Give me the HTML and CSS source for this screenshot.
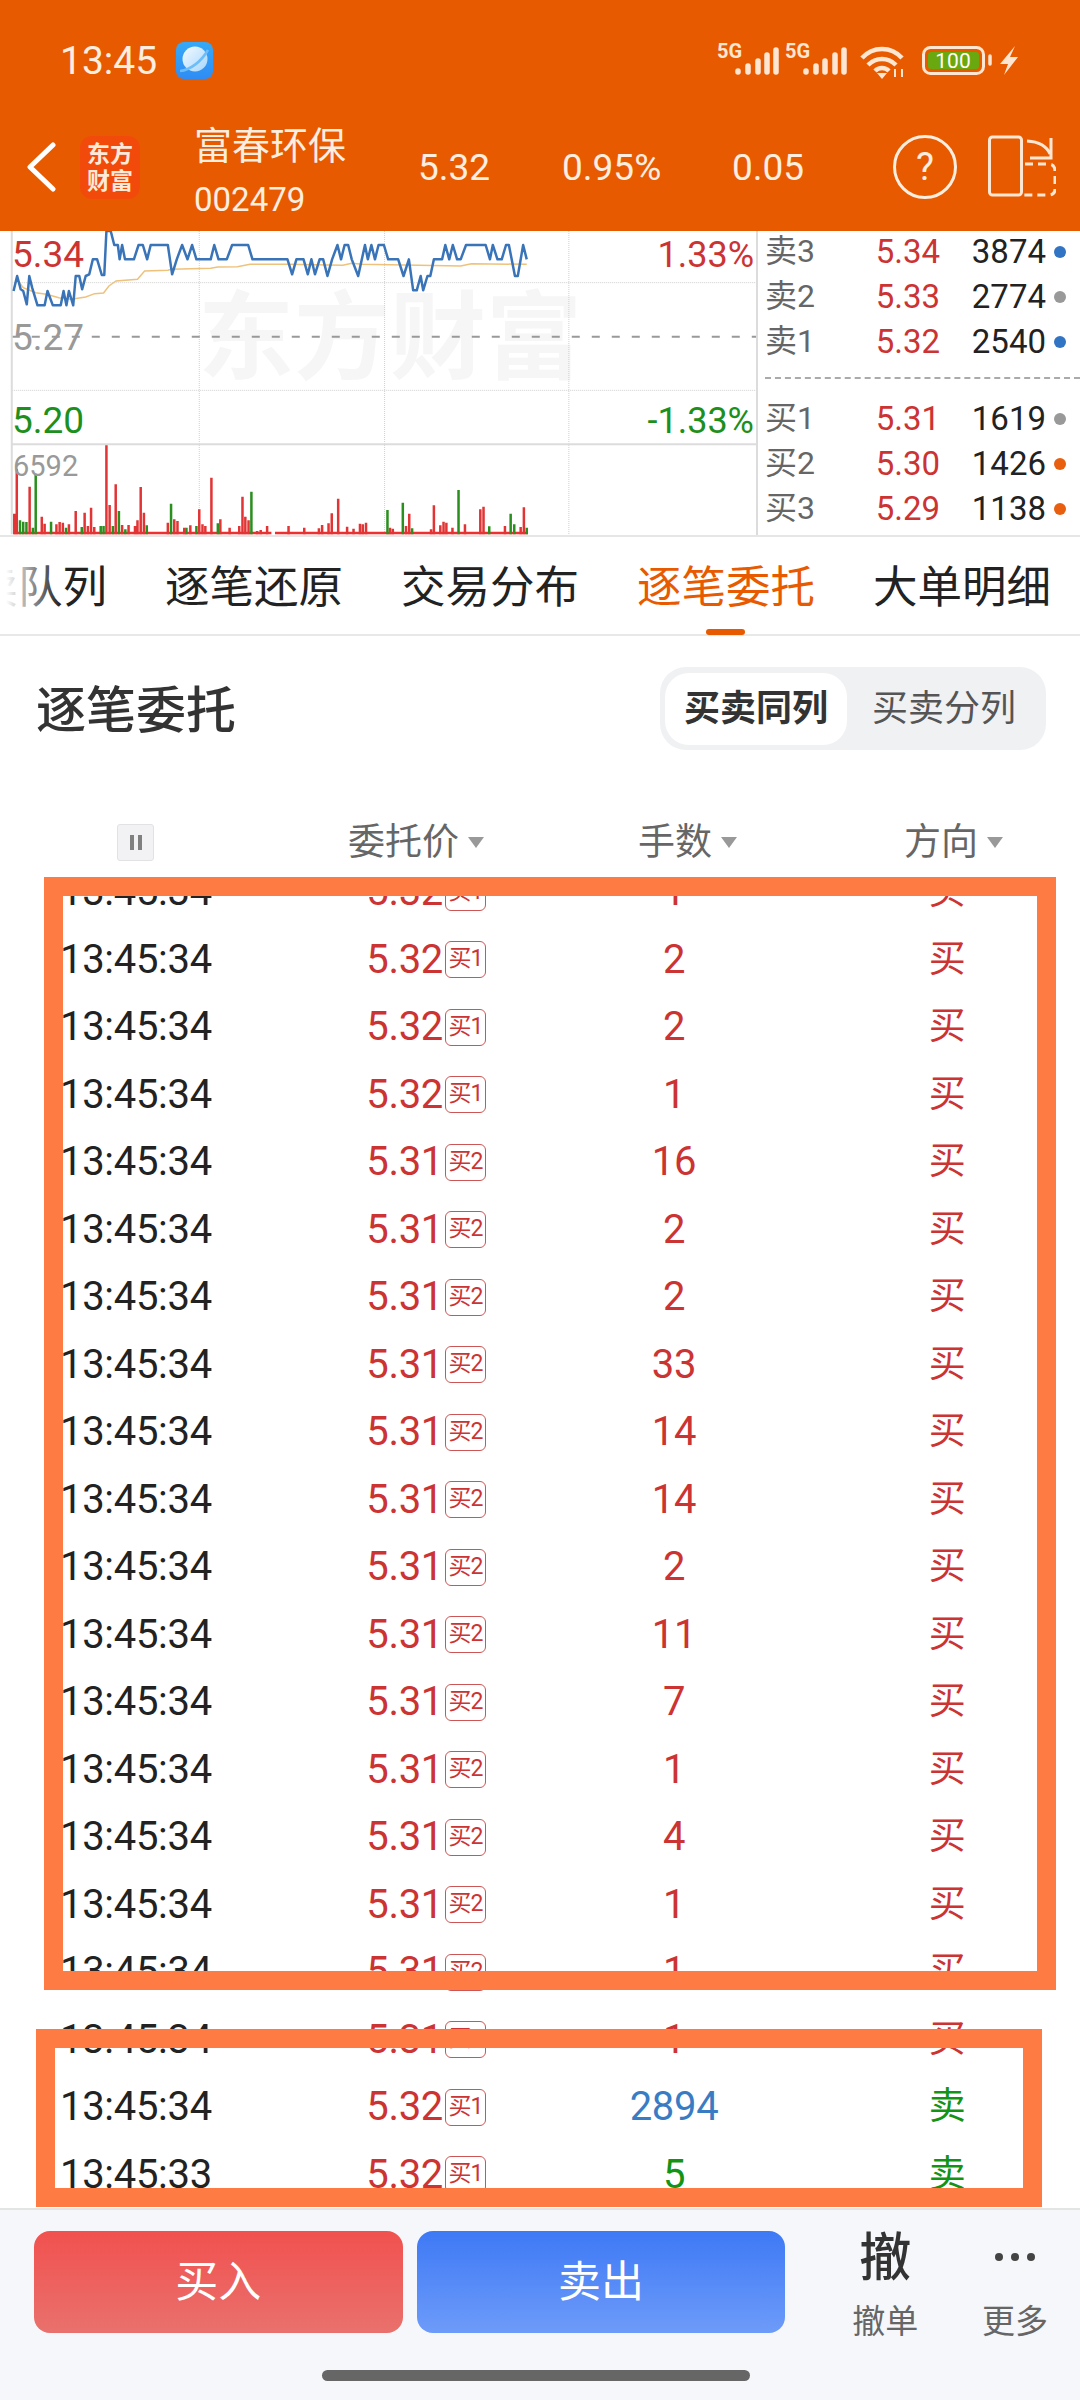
FILE: index.html
```html
<!DOCTYPE html>
<html lang="zh-CN">
<head>
    <meta charset="UTF-8">
    <title>富春环保 002479</title>
    <link rel="stylesheet" href="styles.css">
</head>
<body>
<div class="page">
    <header class="top">
        <div class="status">
            <span class="status-time">13:45</span>
            <svg class="app-icon" viewBox="0 0 37 37">
                <defs>
                    <linearGradient id="appBg" x1="0" y1="0" x2="0" y2="1"><stop offset="0" stop-color="#36a9f7"/><stop offset="1" stop-color="#2f8cf4"/></linearGradient>
                    <linearGradient id="planet" x1="0" y1="0" x2="1" y2="1"><stop offset="0" stop-color="#f4fbff"/><stop offset="1" stop-color="#a5d6fb"/></linearGradient>
                </defs>
                <rect width="37" height="37" rx="8" fill="url(#appBg)"/>
                <circle cx="19" cy="17" r="12.5" fill="url(#planet)"/>
                <path d="M4 29C14 28 25 20 32 8" stroke="#6cbdf9" stroke-width="2.5" fill="none"/>
            </svg>
            <svg class="status-icons" viewBox="0 0 320 50">
                <text x="7" y="22" class="net">5G</text>
                <path d="M28 36v-1M38 36v-6M48 36v-11M57 36v-17M66 36v-22" stroke="#fde6d2" stroke-width="5.5" stroke-linecap="round"/>
                <text x="75" y="22" class="net">5G</text>
                <path d="M96 36v-1M106 36v-6M115 36v-11M125 36v-17M134 36v-22" stroke="#fde6d2" stroke-width="5.5" stroke-linecap="round"/>
                <path d="M152 22C163 10 181 10 192 22M158 29C166 21 178 21 186 29M165 35C169 31 175 31 179 35" stroke="#fde6d2" stroke-width="4.5" fill="none"/>
                <path d="M167 37h10l-5 6z" fill="#fde6d2"/>
                <path d="M185 33v8M192 33v8" stroke="#fde6d2" stroke-width="2"/>
                <rect x="213.500" y="11.500" width="60" height="26" rx="7" fill="none" stroke="#fde6d2" stroke-width="3"/>
                <rect x="218" y="16" width="51" height="17" rx="3" fill="#6aa80f"/>
                <text x="243" y="32" class="batt">100</text>
                <path d="M280 20v8" stroke="#fde6d2" stroke-width="3.500" stroke-linecap="round"/>
                <path d="M305 10L290 28h8l-4 11 14-18h-8z" fill="#fde6d2"/>
            </svg>
        </div>
        <div class="quote">
            <svg class="back" viewBox="0 0 30 50"><path d="M27 3L4 25l23 22" fill="none" stroke="#fff" stroke-width="5" stroke-linecap="round" stroke-linejoin="round"/></svg>
            <div class="logo">东方<br>财富</div>
            <div class="stock">
                <div class="stock-name">富春环保</div>
                <div class="stock-code">002479</div>
            </div>
            <div class="q-val q-price">5.32</div>
            <div class="q-val q-pct">0.95%</div>
            <div class="q-val q-chg">0.05</div>
            <svg class="help" viewBox="0 0 66 66">
                <circle cx="33" cy="33" r="30.500" fill="none" stroke="#fdeee0" stroke-width="3"/>
                <text x="33" y="46" class="help-mark">?</text>
            </svg>
            <svg class="split" viewBox="18 11 68 64">
                <rect x="19.500" y="13" width="32" height="58" rx="3" fill="none" stroke="#fde6d2" stroke-width="3"/>
                <path d="M57 17Q75 18 80 30M81 14V34H60" fill="none" stroke="#fde6d2" stroke-width="3"/>
                <path d="M55 40H78Q85 40 85 47V65Q85 71 78 71H54" fill="none" stroke="#fde6d2" stroke-width="3" stroke-dasharray="8 5"/>
            </svg>
        </div>
    </header>

    <section class="market">
        <div class="chart">
            <svg class="chart-svg" viewBox="0 0 2117 915" preserveAspectRatio="none">
                <!-- grid, units follow the 2.8x / 3x trace of the picture -->
                <path d="M33 155H2117M33 478H2117M558 0V910M1077 0V910M1593 0V910" class="grid"/>
                <path d="M33 317H2117" class="midline"/>
                <path d="M33 640H2117" class="divider"/>
                <path d="M33 0V910" class="divider"/>
                <polyline class="avg" points="48,145 65,170 100,185 130,190 165,200 200,205 240,198 265,188 290,186 305,165 325,150 385,145 405,120 470,118 480,115 590,112 610,108 665,107 700,100 805,100 960,103 985,97 1015,100 1290,105 1320,98 1475,100"/>
                <polyline class="price" points="38,180 48,135 58,175 65,180 75,220 82,135 90,170 105,223 125,223 133,180 148,223 170,223 178,180 186,223 193,180 205,223 212,135 222,135 230,175 240,135 250,130 260,85 272,85 285,132 292,132 298,0 310,0 320,42 330,42 335,85 342,42 350,85 375,85 388,42 400,42 412,85 422,42 470,42 482,130 495,85 510,42 525,85 538,42 550,85 590,85 600,42 612,85 635,85 650,42 695,42 707,85 805,85 818,130 830,85 850,85 862,130 872,85 882,130 895,85 905,85 917,135 930,85 945,42 955,85 965,42 975,42 985,85 1003,135 1022,42 1030,85 1040,42 1050,85 1060,42 1075,42 1087,85 1115,85 1130,135 1145,85 1157,178 1167,178 1178,135 1185,178 1197,135 1205,135 1215,85 1238,85 1247,42 1258,85 1268,42 1280,85 1290,85 1305,42 1360,42 1372,85 1380,42 1393,85 1405,85 1417,42 1425,42 1442,135 1450,135 1465,42 1475,85"/>
                <path class="vol-fill" d="M38 906H760M770 906H1478"/>
                <path class="vol-red" d="M40 848V910M47 715V910M83 767V910M117 857V910M125 878V910M158 880V910M167 873V910M176 875V910M193 880V910M212 840V910M237 845V910M246 885V910M255 830V910M264 888V910M298 643V910M307 822V910M324 760V910M342 882V910M360 882V910M378 885V910M385 868V910M394 768V910M403 845V910M470 875V910M488 865V910M497 870V910M516 890V910M533 883V910M558 835V910M567 880V910M575 885V910M592 740V910M617 865V910M643 890V910M670 885V910M679 797V910M687 857V910M696 868V910M720 900V910M730 897V910M748 885V910M808 885V910M852 890V910M893 892V910M902 882V910M920 877V910M929 847V910M947 803V910M972 887V910M990 893V910M1008 878V910M1016 880V910M1025 875V910M1092 890V910M1100 893V910M1137 885V910M1146 848V910M1207 895V910M1215 823V910M1233 883V910M1242 872V910M1250 875V910M1267 890V910M1302 880V910M1345 835V910M1354 827V910M1414 885V910M1458 888V910M1467 829V910"/>
                <path class="vol-green" d="M56 868V910M65 872V910M74 873V910M92 890V910M100 728V910M143 872V910M185 890V910M229 888V910M282 885V910M290 885V910M316 885V910M333 840V910M351 895V910M411 883V910M479 818V910M522 890V910M550 885V910M610 877V910M704 782V910M1085 837V910M1128 815V910M1154 892V910M1284 777V910M1370 886V910M1430 848V910M1440 880V910M1475 890V910"/>
            </svg>
            <div class="watermark">东方财富</div>
            <span class="axis axis-high">5.34</span>
            <span class="axis axis-mid">5.27</span>
            <span class="axis axis-low">5.20</span>
            <span class="axis axis-vol">6592</span>
            <span class="axis axis-up">1.33%</span>
            <span class="axis axis-down">-1.33%</span>
        </div>
        <div class="book">
            <div class="book-row"><span class="b-label">卖3</span><span class="b-price">5.34</span><span class="b-qty">3874</span><i class="dot dot-blue"></i></div>
            <div class="book-row"><span class="b-label">卖2</span><span class="b-price">5.33</span><span class="b-qty">2774</span><i class="dot dot-gray"></i></div>
            <div class="book-row"><span class="b-label">卖1</span><span class="b-price">5.32</span><span class="b-qty">2540</span><i class="dot dot-blue"></i></div>
            <div class="book-sep"></div>
            <div class="book-row"><span class="b-label">买1</span><span class="b-price">5.31</span><span class="b-qty">1619</span><i class="dot dot-gray"></i></div>
            <div class="book-row"><span class="b-label">买2</span><span class="b-price">5.30</span><span class="b-qty">1426</span><i class="dot dot-orange"></i></div>
            <div class="book-row"><span class="b-label">买3</span><span class="b-price">5.29</span><span class="b-qty">1138</span><i class="dot dot-orange"></i></div>
        </div>
    </section>

    <nav class="tabs">
        <span class="tab">买卖队列</span>
        <span class="tab">逐笔还原</span>
        <span class="tab">交易分布</span>
        <span class="tab tab-on">逐笔委托</span>
        <span class="tab">大单明细</span>
        <div class="tabs-fade"></div>
    </nav>

    <div class="head">
        <h2 class="head-title">逐笔委托</h2>
        <div class="seg">
            <span class="seg-item seg-on">买卖同列</span>
            <span class="seg-item">买卖分列</span>
        </div>
    </div>

    <div class="cols">
        <span class="pause"><i></i><i></i></span>
        <span class="col-name">委托价<b></b></span>
        <span class="col-name">手数<b></b></span>
        <span class="col-name">方向<b></b></span>
    </div>

    <div class="list">
        <div class="row"><span>13:45:34</span><span class="price">5.32<em>买1</em></span><span class="qty">1</span><span class="dir">买</span></div>
        <div class="row"><span>13:45:34</span><span class="price">5.32<em>买1</em></span><span class="qty">2</span><span class="dir">买</span></div>
        <div class="row"><span>13:45:34</span><span class="price">5.32<em>买1</em></span><span class="qty">2</span><span class="dir">买</span></div>
        <div class="row"><span>13:45:34</span><span class="price">5.32<em>买1</em></span><span class="qty">1</span><span class="dir">买</span></div>
        <div class="row"><span>13:45:34</span><span class="price">5.31<em>买2</em></span><span class="qty">16</span><span class="dir">买</span></div>
        <div class="row"><span>13:45:34</span><span class="price">5.31<em>买2</em></span><span class="qty">2</span><span class="dir">买</span></div>
        <div class="row"><span>13:45:34</span><span class="price">5.31<em>买2</em></span><span class="qty">2</span><span class="dir">买</span></div>
        <div class="row"><span>13:45:34</span><span class="price">5.31<em>买2</em></span><span class="qty">33</span><span class="dir">买</span></div>
        <div class="row"><span>13:45:34</span><span class="price">5.31<em>买2</em></span><span class="qty">14</span><span class="dir">买</span></div>
        <div class="row"><span>13:45:34</span><span class="price">5.31<em>买2</em></span><span class="qty">14</span><span class="dir">买</span></div>
        <div class="row"><span>13:45:34</span><span class="price">5.31<em>买2</em></span><span class="qty">2</span><span class="dir">买</span></div>
        <div class="row"><span>13:45:34</span><span class="price">5.31<em>买2</em></span><span class="qty">11</span><span class="dir">买</span></div>
        <div class="row"><span>13:45:34</span><span class="price">5.31<em>买2</em></span><span class="qty">7</span><span class="dir">买</span></div>
        <div class="row"><span>13:45:34</span><span class="price">5.31<em>买2</em></span><span class="qty">1</span><span class="dir">买</span></div>
        <div class="row"><span>13:45:34</span><span class="price">5.31<em>买2</em></span><span class="qty">4</span><span class="dir">买</span></div>
        <div class="row"><span>13:45:34</span><span class="price">5.31<em>买2</em></span><span class="qty">1</span><span class="dir">买</span></div>
        <div class="row"><span>13:45:34</span><span class="price">5.31<em>买2</em></span><span class="qty">1</span><span class="dir">买</span></div>
        <div class="row"><span>13:45:34</span><span class="price">5.31<em>买2</em></span><span class="qty">1</span><span class="dir">买</span></div>
        <div class="row"><span>13:45:34</span><span class="price">5.32<em>买1</em></span><span class="qty qty-big">2894</span><span class="dir dir-sell">卖</span></div>
        <div class="row"><span>13:45:33</span><span class="price">5.32<em>买1</em></span><span class="qty qty-sell">5</span><span class="dir dir-sell">卖</span></div>
    </div>

    <footer class="bar">
        <div class="bar-main">
            <span class="btn btn-buy">买入</span>
            <span class="btn btn-sell">卖出</span>
            <div class="act">
                <span class="act-big">撤</span>
                <span class="act-text">撤单</span>
            </div>
            <div class="act">
                <span class="act-dots"><i></i><i></i><i></i></span>
                <span class="act-text">更多</span>
            </div>
        </div>
        <div class="home"></div>
    </footer>

    <!-- marks drawn over the screenshot -->
    <div class="mark mark-a"></div>
    <div class="mark mark-b"></div>
</div>
</body>
</html>
```

FILE: styles.css
```css
* {
    margin: 0;
    padding: 0;
    box-sizing: border-box;
}

body {
    font-family: "Roboto", "Noto Sans CJK SC", sans-serif;
    background: #fff;
}

.page {
    position: relative;
    width: 1080px;
    height: 2400px;
    display: flex;
    flex-direction: column;
    overflow: hidden;
}

/* top orange block */
.top {
    height: 231px;
    background: #e85a00;
    color: #fdeee0;
}

.status {
    height: 115px;
    display: flex;
    align-items: center;
    padding: 6px 0 0 60px;
}

.status-time {
    font-size: 39px;
    line-height: 46px;
    width: 116px;
}

.app-icon {
    width: 37px;
    height: 37px;
}

.status-icons {
    width: 320px;
    height: 50px;
    margin-left: 497px;
}

.net {
    font: bold 20px "Roboto", sans-serif;
    fill: #fde6d2;
}

.batt {
    font: 21px "Roboto", sans-serif;
    fill: #fff;
    text-anchor: middle;
}

.quote {
    height: 116px;
    display: flex;
    align-items: center;
    padding: 0 0 12px 26px;
}

.back {
    width: 30px;
    height: 50px;
    margin-right: 24px;
}

.logo {
    width: 60px;
    height: 63px;
    margin-right: 54px;
    border-radius: 12px;
    background: #f24a0b;
    color: #ffe9d8;
    font-size: 23px;
    line-height: 27px;
    font-weight: 700;
    text-align: center;
    padding-top: 5px;
}

.stock {
    width: 224px;
    margin-top: 8px;
}

.stock-name {
    font-size: 38px;
    line-height: 50px;
}

.stock-code {
    font-size: 33px;
    line-height: 42px;
    margin-top: 8px;
}

.q-val {
    font-size: 37px;
    line-height: 46px;
    margin-top: 2px;
}

.q-price {
    width: 144px;
}

.q-pct {
    width: 170px;
}

.q-chg {
    width: 160px;
}

.help {
    width: 66px;
    height: 66px;
    margin-right: 30px;
}

.help-mark {
    font: 38px "Roboto", sans-serif;
    fill: #fdeee0;
    text-anchor: middle;
}

.split {
    width: 68px;
    height: 64px;
}

/* chart and order book */
.market {
    height: 306px;
    display: flex;
    border-bottom: 2px solid #e6e6e6;
}

.chart {
    position: relative;
    width: 756px;
    overflow: hidden;
}

.chart-svg {
    position: absolute;
    left: 0;
    top: 0;
    width: 756px;
    height: 305px;
}

.chart-svg .grid {
    fill: none;
    stroke: #cfcfcf;
    stroke-width: 1;
    stroke-dasharray: 1 1;
    vector-effect: non-scaling-stroke;
}

.midline {
    fill: none;
    stroke: #999;
    stroke-width: 2;
    stroke-dasharray: 8 12;
    vector-effect: non-scaling-stroke;
}

.divider {
    fill: none;
    stroke: #dcdcdc;
    stroke-width: 2;
    vector-effect: non-scaling-stroke;
}

.chart-svg .price {
    fill: none;
    stroke: #3a74b8;
    stroke-width: 2.5;
    stroke-linejoin: round;
    vector-effect: non-scaling-stroke;
}

.avg {
    fill: none;
    stroke: #eec27a;
    stroke-width: 1.5;
    vector-effect: non-scaling-stroke;
}

.vol-fill {
    fill: none;
    stroke: #ee3030;
    stroke-width: 2.5;
    vector-effect: non-scaling-stroke;
}

.vol-red {
    fill: none;
    stroke: #e23434;
    stroke-width: 2.5;
    vector-effect: non-scaling-stroke;
}

.vol-green {
    fill: none;
    stroke: #2a8f1e;
    stroke-width: 2.5;
    vector-effect: non-scaling-stroke;
}

.watermark {
    position: absolute;
    left: 198px;
    top: 47px;
    font-size: 96px;
    line-height: 120px;
    font-weight: 700;
    color: #f6f6f6;
    white-space: nowrap;
    z-index: -1;
}

.axis {
    position: absolute;
    font-size: 37px;
    line-height: 42px;
}

.axis-high {
    left: 12px;
    top: 3px;
    color: #cc3333;
}

.axis-mid {
    left: 12px;
    top: 86px;
    color: #999;
}

.axis-low {
    left: 12px;
    top: 169px;
    color: #1d8f1d;
}

.axis-vol {
    left: 13px;
    top: 217px;
    font-size: 29px;
    line-height: 36px;
    color: #999;
}

.axis-up {
    right: 2px;
    top: 3px;
    font-size: 36px;
    color: #cc3333;
}

.axis-down {
    right: 2px;
    top: 169px;
    font-size: 36px;
    color: #1d8f1d;
}

.book {
    width: 324px;
    padding-left: 7px;
    border-left: 2px solid #dcdcdc;
    font-size: 33px;
}

.book-row {
    height: 45px;
    display: grid;
    grid-template-columns: 60px 115px 106px 20px;
    align-items: center;
    line-height: 45px;
}

.book-row:first-child {
    margin-top: -2px;
}

.b-label {
    color: #666;
    font-size: 32px;
}

.b-price {
    color: #cc3333;
    text-align: right;
}

.b-qty {
    color: #222;
    text-align: right;
}

.dot {
    width: 12px;
    height: 12px;
    border-radius: 50%;
    margin-left: 8px;
}

.dot-blue {
    background: #3274c4;
}

.dot-gray {
    background: #999;
}

.dot-orange {
    background: #e85f10;
}

.book-sep {
    height: 15px;
    margin-bottom: 17px;
    border-bottom: 2px dashed #aaa;
}

/* tabs */
.tabs {
    position: relative;
    height: 99px;
    flex: none;
    display: flex;
    gap: 58px;
    padding-top: 19px;
    border-bottom: 2px solid #e8e8e8;
    font-size: 44.5px;
    line-height: 64px;
    color: #222;
    white-space: nowrap;
}

.tab:first-child {
    margin-left: -71px;
}

.tab-on {
    position: relative;
    color: #e85a00;
}

.tab-on::after {
    content: "";
    position: absolute;
    left: 69px;
    bottom: -1px;
    width: 39px;
    height: 6px;
    border-radius: 3px;
    background: #e85a00;
}

.tabs-fade {
    position: absolute;
    left: 0;
    top: 0;
    bottom: 2px;
    width: 60px;
    background: linear-gradient(to right, #fff 10%, rgba(255, 255, 255, 0));
}

/* section head */
.head {
    height: 153px;
    flex: none;
    display: flex;
    align-items: flex-start;
    justify-content: space-between;
    padding: 31px 34px 0 36px;
}

.head-title {
    font-size: 50px;
    line-height: 84px;
    margin-top: 2px;
    font-weight: 500;
    color: #333;
}

.seg {
    width: 386px;
    height: 83px;
    display: flex;
    align-items: center;
    padding: 0 5px;
    border-radius: 26px;
    background: #f0f1f3;
    font-size: 36px;
    color: #555;
}

.seg-item {
    width: 182px;
    height: 72px;
    line-height: 72px;
    text-align: center;
    white-space: nowrap;
}

.seg-item + .seg-item {
    width: 194px;
}

.seg-on {
    background: #fff;
    border-radius: 24px;
    font-weight: 700;
    color: #333;
}

/* table */
.cols {
    height: 88px;
    display: grid;
    grid-template-columns: 231px 290px 266px auto;
    align-items: center;
    align-content: start;
    padding: 35px 0 0 117px;
    font-size: 37px;
    line-height: 37px;
    color: #666;
    flex: none;
}

.pause {
    width: 37px;
    height: 37px;
    display: flex;
    justify-content: center;
    align-items: center;
    gap: 4px;
    background: #f2f2f4;
    border: 1px solid #e2e2e4;
    border-radius: 3px;
}

.pause i {
    width: 4px;
    height: 15px;
    background: #808080;
}

.col-name {
    display: flex;
    align-items: center;
}

.col-name b {
    width: 0;
    height: 0;
    margin-left: 9px;
    border-left: 8px solid transparent;
    border-right: 8px solid transparent;
    border-top: 11px solid #999;
}

.list {
    flex: 1;
    min-height: 0;
    overflow: hidden;
}

.row {
    height: 67.5px;
    display: grid;
    grid-template-columns: 296px 130px 376px 170px;
    align-items: center;
    padding-left: 60px;
    font-size: 40px;
    line-height: 48px;
    letter-spacing: -0.3px;
    color: #222;
    white-space: nowrap;
}

.row:first-child {
    margin-top: -18.75px;
}

.price {
    display: flex;
    justify-content: flex-end;
    align-items: center;
    gap: 2px;
    color: #cc3333;
}

.price em {
    width: 41px;
    height: 37px;
    border: 1px solid #cc5555;
    border-radius: 6px;
    font-style: normal;
    font-size: 23px;
    line-height: 34px;
    text-align: center;
    letter-spacing: -1px;
}

.qty {
    text-align: center;
    color: #cc3333;
}

.qty-big {
    color: #3a7cc4;
}

.qty-sell {
    color: #149314;
}

.dir {
    text-align: center;
    font-size: 37px;
    color: #cc3333;
}

.dir-sell {
    color: #149314;
}

/* bottom bar */
.bar {
    height: 192px;
    background: #f5f7fa;
    border-top: 2px solid #e4e4e4;
    flex: none;
    position: relative;
    z-index: 2;
}

.bar-main {
    display: flex;
    padding: 21px 0 0 34px;
    height: 136px;
}

.btn {
    width: 369px;
    height: 102px;
    border-radius: 16px;
    color: #fff;
    font-size: 43px;
    line-height: 102px;
    text-align: center;
}

.btn-buy {
    background: linear-gradient(#f1514f, #e9716d);
    margin-right: 14px;
}

.btn-sell {
    background: linear-gradient(#3e79f5, #6d9bf9);
    margin-right: 35px;
}

.act {
    width: 130px;
    margin-top: -2px;
    display: flex;
    flex-direction: column;
    align-items: center;
}

.act-big {
    height: 70px;
    font-size: 52px;
    line-height: 60px;
    font-weight: 500;
    color: #333;
}

.act-text {
    font-size: 33px;
    line-height: 40px;
    color: #666;
    margin-top: 3px;
}

.act-dots {
    height: 70px;
    display: flex;
    gap: 8px;
    padding-top: 24px;
}

.act-dots i {
    width: 8px;
    height: 8px;
    border-radius: 50%;
    background: #444;
}

.home {
    width: 428px;
    height: 11px;
    margin: 24px 0 0 322px;
    border-radius: 6px;
    background: #666;
}

/* hand drawn boxes */
.mark {
    position: absolute;
    border: 19px solid #fe7b44;
}

.mark-a {
    left: 44px;
    top: 877px;
    width: 1012px;
    height: 1113px;
}

.mark-b {
    left: 36px;
    top: 2029px;
    width: 1006px;
    height: 178px;
}
```
